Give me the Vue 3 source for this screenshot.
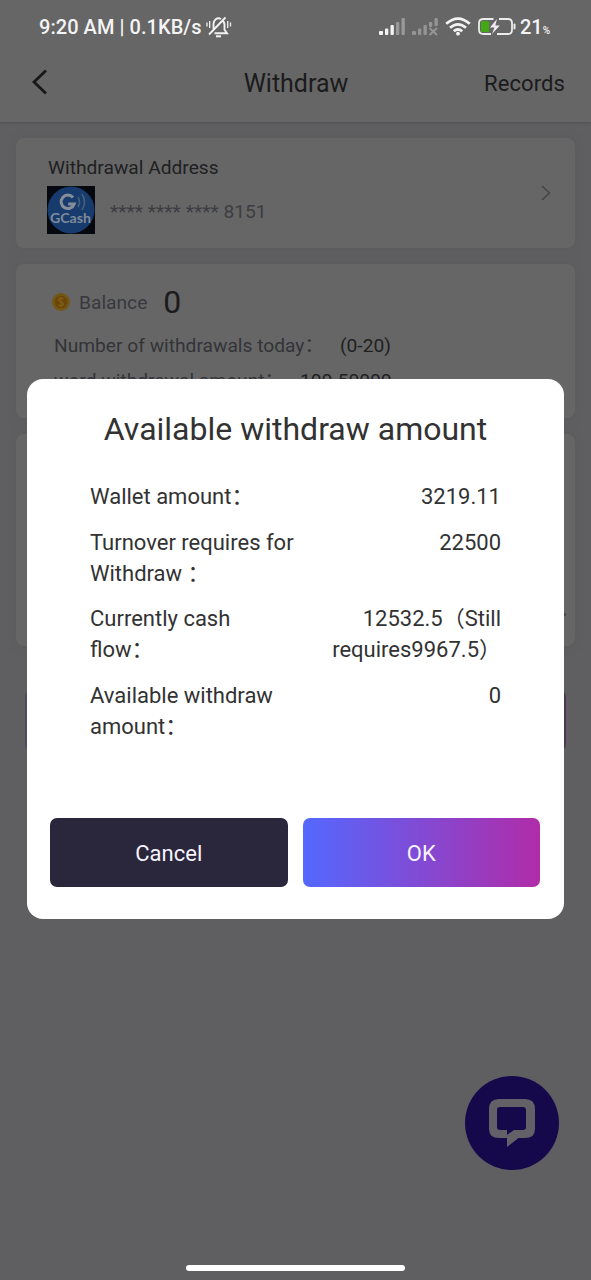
<script setup>
const rows = [
  { label: ['Wallet amount：'], value: ['3219.11'] },
  { label: ['Turnover requires for', 'Withdraw ：'], value: ['22500'] },
  { label: ['Currently cash', 'flow：'], value: ['12532.5（Still', 'requires9967.5）'] },
  { label: ['Available withdraw', 'amount：'], value: ['0'] },
]
</script>

<template>
  <div class="screen">
    <div class="top">
      <div class="status">
        <span class="time">9:20 AM | 0.1KB/s</span>
        <svg class="bell" width="26" height="22" viewBox="0 0 26 22" fill="none" stroke="#f2f2f2" stroke-width="1.9">
          <path d="M8.500 17.200H21l-2.500-3.500V8.500q-.3-2.500-1.800-4M15 3C11 .8 7.500 4 7.500 8v5M3 18.500 19.500 1.500" />
          <path d="M1 6.500v4M3.700 5v7M21.700 5v7M24.500 6.500v4" stroke-width="1.300" />
          <path d="M10 20.300h5" stroke-width="2" />
        </svg>
        <svg class="sig" width="26" height="18" viewBox="0 0 26 18">
          <g fill="#f4f4f4"><rect x="0" y="13" width="4" height="4" rx="1" /><rect x="6" y="10.500" width="3.300" height="6.500" rx="1" /><rect x="11.500" y="7" width="3.300" height="10" rx="1" /></g>
          <g fill="#999"><rect x="17" y="4" width="3.300" height="13" rx="1" /><rect x="22.500" y="0" width="3.300" height="17" rx="1" /></g>
        </svg>
        <svg class="sig2" width="27" height="18" viewBox="0 0 27 18" fill="#959595">
          <rect x="0" y="13" width="4" height="4" rx="1" /><rect x="6" y="10.500" width="3.300" height="6.500" rx="1" /><rect x="11.500" y="7" width="3.300" height="10" rx="1" /><rect x="17" y="4" width="3.300" height="5" rx="1" /><rect x="22.500" y="0" width="3.300" height="8" rx="1" />
          <path d="M17.500 10l7.500 7M25 10l-7.500 7" stroke="#959595" stroke-width="2" />
        </svg>
        <svg class="wifi" width="26" height="19" viewBox="0 0 26 19" fill="none" stroke="#f4f4f4" stroke-width="2.800">
          <path d="M1.200 6.800Q13-3.600 24.800 6.800M5 10.800q8-6.800 16 0M8.800 14.300q4.200-3.600 8.400 0" />
          <circle cx="13" cy="16.700" r="1.900" fill="#f4f4f4" stroke="none" />
        </svg>
        <svg class="batt" width="38" height="17" viewBox="0 0 38 17">
          <path d="M15.500 1H5.500Q1 1 1 5v7q0 4 4.500 4H13M21 1h9q4 0 4 4v7q0 4-4 4h-11" fill="none" stroke="#ececec" stroke-width="1.800" />
          <rect x="3" y="3" width="8" height="11" rx="1.500" fill="#42a814" />
          <path d="M19 1l-7 8.500h4.500L14 16l7.800-8.500h-4.500z" fill="#f4eaf4" />
          <rect x="35.500" y="5.500" width="2" height="6" rx="1" fill="#e8e8e8" />
        </svg>
        <span class="pct">21<small>%</small></span>
      </div>
      <div class="nav">
        <svg class="back" width="16" height="26" viewBox="0 0 16 26" fill="none" stroke="#18181a" stroke-width="2.800"><path d="M15 1.500 3 13l12 11.500" /></svg>
        <span class="title">Withdraw</span>
        <span class="records">Records</span>
      </div>
    </div>

    <div class="cards">
      <div class="card address">
        <div>
          <div class="addr-title">Withdrawal Address</div>
          <div class="account">
            <svg width="48" height="48" viewBox="0 0 48 48">
              <rect width="48" height="48" fill="#06080f" />
              <circle cx="24" cy="24" r="23.500" fill="#173b6c" />
              <path d="M26 11.500a6.700 6.700 0 1 0 1.200 6.500h-6" fill="none" stroke="#878e99" stroke-width="3" />
              <path d="M31 11q3 5 0 10M35 8q5 8 0 16" fill="none" stroke="#45607c" stroke-width="1.600" />
              <text x="3" y="37" textLength="41" lengthAdjust="spacingAndGlyphs" class="gcash">GCash</text>
            </svg>
            <span class="number">**** **** **** 8151</span>
          </div>
        </div>
        <svg class="chev" width="12" height="16" viewBox="0 0 12 16" fill="none" stroke="#444446" stroke-width="1.400"><path d="M2 1l7.500 7L2 15" /></svg>
      </div>

      <div class="card balance">
        <div class="bal-line">
          <svg width="20" height="20" viewBox="0 0 20 20"><circle cx="10" cy="10" r="9" fill="#755715" /><circle cx="10" cy="10" r="6.300" fill="#6a4708" /><path d="M12.500 7q-4-2-5 .5c0 2.500 5 2 5 4.500q-1 3-5.500 1M10 5v10" fill="none" stroke="#80601b" stroke-width="1.200" /></svg>
          <span class="bal-label">Balance</span><span class="zero">0</span>
        </div>
        <div class="info"><span class="i1">Number of withdrawals today：</span><b>(0-20)</b></div>
        <div class="info second"><span class="i2">word withdrawal amount：</span><b>100-50000</b></div>
      </div>

      <div class="card form"><i class="dot"></i></div>
      <div class="submit"></div>
    </div>

    <div class="dialog">
      <h2>Available withdraw amount</h2>
      <div class="rows">
        <div v-for="(r, i) in rows" :key="i" class="row">
          <div><div v-for="l in r.label" :key="l">{{ l }}</div></div>
          <div class="val"><div v-for="l in r.value" :key="l">{{ l }}</div></div>
        </div>
      </div>
      <div class="actions">
        <button class="cancel">Cancel</button>
        <button class="ok">OK</button>
      </div>
    </div>

    <div class="chat">
      <svg width="46" height="48" viewBox="0 0 46 48">
        <path fill-rule="evenodd" fill="#636167" d="M10 0h26q10 0 10 10v20q0 9-10 9h-6.500L18 48V39h-8Q0 39 0 30V10Q0 0 10 0ZM11 8q-3 0-3 3v17q0 3 3 3h7l0 5 7-5h9q3 0 3-3V11q0-3-3-3Z" />
      </svg>
    </div>
    <div class="home"></div>
  </div>
</template>

<style>
body { margin: 0; background: #5f5f61; }
</style>

<style scoped>
.screen { position: relative; height: 1280px; overflow: hidden; background: #5f5f61; font-family: Roboto, "Noto Sans CJK SC", sans-serif; color: #1b1b1d; }
.screen * { box-sizing: border-box; }
.top { height: 122px; background: #666; box-shadow: 0 1px 2px #505052; }
.status { display: flex; align-items: center; height: 54px; padding-left: 39px; color: #f4f4f4; font-weight: 500; font-size: 20px; white-space: nowrap; }
.status svg { flex: none; }
.time { width: 163px; letter-spacing: .05px; }
.bell { margin: -1px 0 0 4px; }
.sig { margin-left: 147px; }
.sig2 { margin-left: 7px; }
.wifi { margin: -2px 0 0 6px; }
.batt { margin: -2px 0 0 7px; }
.pct { margin-left: 4px; }
.pct small { font-size: 10px; }
.nav { display: grid; grid-template-columns: 1fr auto 1fr; align-items: center; height: 58px; padding: 0 26px 0 31px; }
.back { margin-top: -2px; }
.title { font-size: 25px; margin-left: -4px; }
.records { justify-self: end; font-size: 22px; letter-spacing: .1px; }
.cards { padding: 16px 16px 0; }
.card { background: #666; border-radius: 8px; margin-bottom: 16px; box-shadow: 0 0 8px #5b5b5e; }
.address { height: 110px; display: flex; justify-content: space-between; align-items: center; padding: 0 23px 0 31px; }
.addr-title { font-size: 19.200px; line-height: 24px; color: #202023; margin: 4px 0 0 1px; }
.account { display: flex; align-items: center; margin-top: 6px; }
.gcash { font: 700 12.500px Lato, sans-serif; fill: #7f8a9a; }
.number { margin: 3px 0 0 15px; font-size: 19.200px; color: #3c3d41; }
.balance { height: 154px; padding: 22px 0 0 35px; overflow: hidden; }
.bal-line { display: flex; align-items: center; height: 32px; }
.bal-label { margin-left: 8px; font-size: 19.200px; color: #38393d; }
.zero { margin-left: 16px; font-size: 32px; }
.info { display: flex; height: 35px; line-height: 35px; padding-left: 3px; margin-top: 10px; font-size: 19.200px; color: #333438; }
.info.second { margin-top: 0; }
.info b { font-weight: 400; color: #202022; }
.i1 { width: 286px; }
.i2 { width: 246px; }
.form { height: 212px; display: flex; justify-content: flex-end; align-items: flex-end; padding: 0 9px 30px; }
.dot { width: 3px; height: 3px; background: #444; border-radius: 50%; }
.submit { height: 63px; margin: 43px 9px 0; border-radius: 8px; background: linear-gradient(90deg, #4c4c61, #4e3850); }
.dialog { position: absolute; left: 27px; top: 379px; width: 537px; height: 540px; padding: 0 24px; border-radius: 16px; background: #fff; color: #323233; }
h2 { margin: 31px 0 0; font-size: 32px; line-height: 38px; font-weight: 400; text-align: center; white-space: nowrap; }
.rows { height: 337px; padding: 33px 39px 0; font-size: 22px; line-height: 31px; }
.row { display: flex; justify-content: space-between; margin-bottom: 14.500px; white-space: nowrap; }
.val { text-align: right; }
.actions { display: grid; grid-template-columns: 1fr 1fr; gap: 15px; margin: 33px 0 0 -1px; }
button { height: 69px; border: 0; padding: 2px 0 0; border-radius: 7px; color: #f7f3ff; font: 400 22px Roboto, sans-serif; }
.cancel { background: #2a263c; }
.ok { background: linear-gradient(90deg, #5468ff, #b02ca8); }
.chat { position: absolute; left: 465px; top: 1076px; width: 94px; height: 94px; border-radius: 50%; background: #15094b; display: grid; place-items: center; }
.home { position: absolute; left: 186px; top: 1265px; width: 219px; height: 6px; border-radius: 3px; background: #fff; }
</style>
